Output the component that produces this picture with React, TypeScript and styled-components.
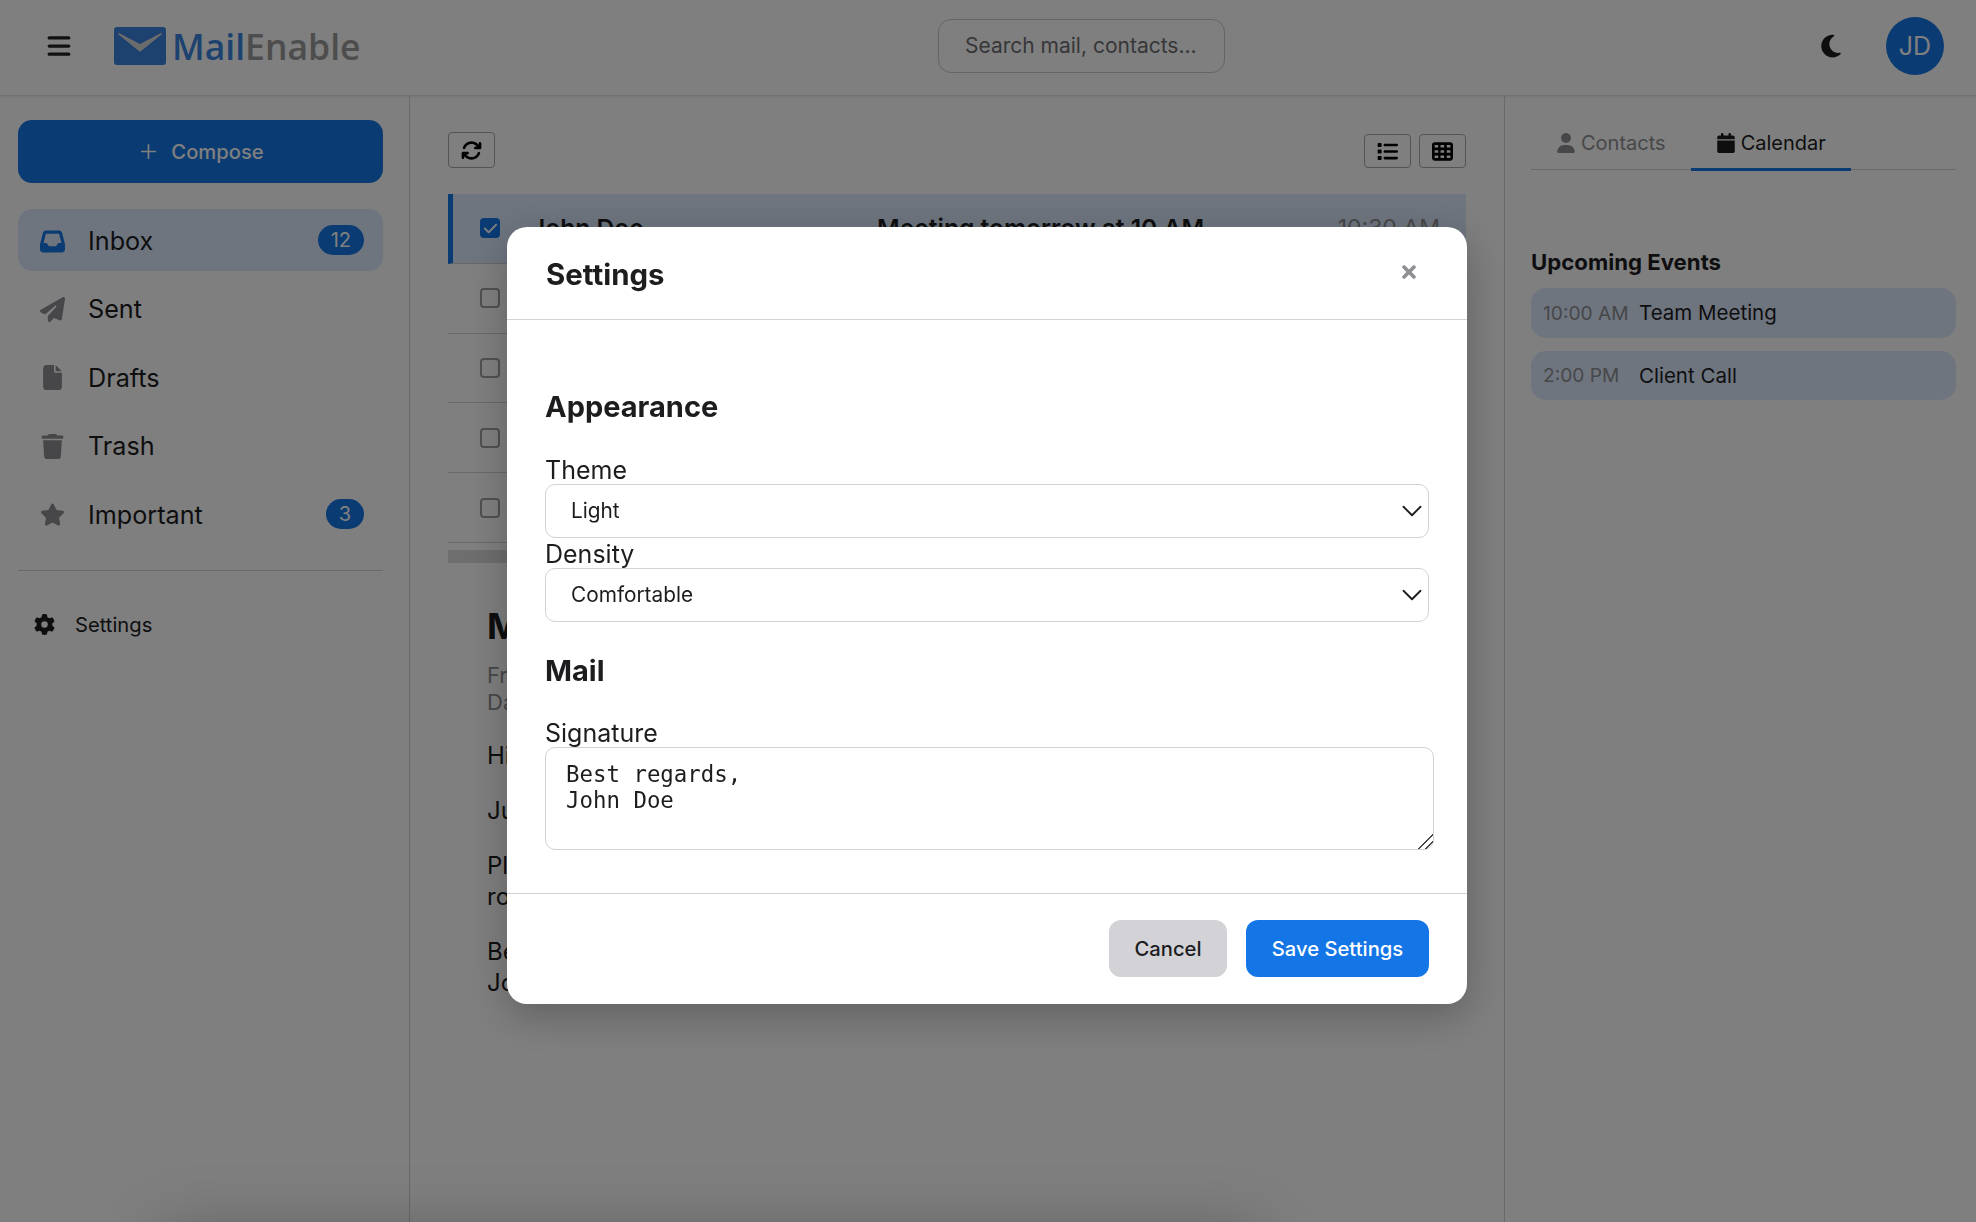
import React from 'react';
import styled, {createGlobalStyle} from 'styled-components';
import {FaTimes} from 'react-icons/fa';
import {
    FaArrowsRotate, FaBars, FaCalendar, FaCheck, FaFile, FaGear, FaInbox, FaList, FaMoon, FaPaperPlane,
    FaStar, FaTableCells, FaTrash, FaUser
} from 'react-icons/fa6';
import {ChevronDown, Plus} from 'lucide-react';

const navItems = [
    {label: 'Inbox', icon: <FaInbox/>, count: 12, active: true},
    {label: 'Sent', icon: <FaPaperPlane/>},
    {label: 'Drafts', icon: <FaFile/>},
    {label: 'Trash', icon: <FaTrash/>},
    {label: 'Important', icon: <FaStar/>, count: 3},
];

const mails = [
    {from: 'John Doe', subject: 'Meeting tomorrow at 10 AM', time: '10:30 AM', selected: true},
    {from: 'Jane Smith', subject: 'Project update', time: '9:15 AM'},
    {from: 'Mark Wilson', subject: 'Invoice attached', time: 'Yesterday'},
    {from: 'Anna Lee', subject: 'Lunch on Friday?', time: 'Yesterday'},
    {from: 'Support', subject: 'Your ticket was resolved', time: 'Monday'},
];

const events = [
    {time: '10:00 AM', title: 'Team Meeting'},
    {time: '2:00 PM', title: 'Client Call'},
];

function App() {
    return (
        <>
            <GlobalStyle/>
            <Page>
                <Header>
                    <HeaderLeft>
                        <MenuButton><FaBars/></MenuButton>
                        <Logo>
                            <svg width="52" height="38" viewBox="0 0 52 38">
                                <rect width="52" height="38" rx="3" fill="#3d84e0"/>
                                <path d="M5 7 L26 24 L47 7 L26 18 Z" fill="#d8d8d8" stroke="#d8d8d8" strokeWidth="1.5" strokeLinejoin="round"/>
                            </svg>
                            <LogoText><span>Mail</span>Enable</LogoText>
                        </Logo>
                    </HeaderLeft>
                    <Search placeholder="Search mail, contacts..."/>
                    <HeaderRight>
                        <MoonIcon><FaMoon/></MoonIcon>
                        <Avatar>JD</Avatar>
                    </HeaderRight>
                </Header>
                <Columns>
                    <Sidebar>
                        <ComposeButton><Plus size={23} strokeWidth={1.8}/>Compose</ComposeButton>
                        <Nav>
                            {navItems.map((item) => (
                                <NavItem key={item.label} $active={item.active}>
                                    <NavIcon $active={item.active}>{item.icon}</NavIcon>
                                    <NavLabel>{item.label}</NavLabel>
                                    {item.count && <Badge>{item.count}</Badge>}
                                </NavItem>
                            ))}
                        </Nav>
                        <Separator/>
                        <SettingsLink><FaGear/>Settings</SettingsLink>
                    </Sidebar>
                    <Main>
                        <Toolbar>
                            <ToolButton $tall><FaArrowsRotate/></ToolButton>
                            <ToolGroup>
                                <ToolButton><FaList/></ToolButton>
                                <ToolButton><FaTableCells/></ToolButton>
                            </ToolGroup>
                        </Toolbar>
                        <MailList>
                            {mails.map((mail) => (
                                <MailRow key={mail.from} $selected={mail.selected}>
                                    <CheckBox $checked={mail.selected}>{mail.selected && <FaCheck/>}</CheckBox>
                                    <MailFrom>{mail.from}</MailFrom>
                                    <MailSubject>{mail.subject}</MailSubject>
                                    <MailTime>{mail.time}</MailTime>
                                </MailRow>
                            ))}
                        </MailList>
                        <ListScrollbar/>
                        <Detail>
                            <DetailTitle>Meeting tomorrow at 10 AM</DetailTitle>
                            <DetailMeta>From: John Doe<br/>Date: Today, 10:30 AM</DetailMeta>
                            <DetailText>Hi team,</DetailText>
                            <DetailText>Just a reminder about our meeting tomorrow at 10 AM.</DetailText>
                            <DetailText>Please bring your project updates and be ready to discuss the<br/>roadmap for next quarter.</DetailText>
                            <DetailText>Best regards,<br/>John Doe</DetailText>
                        </Detail>
                    </Main>
                    <RightPanel>
                        <Tabs>
                            <Tab><FaUser/>Contacts</Tab>
                            <Tab $active><FaCalendar/>Calendar</Tab>
                        </Tabs>
                        <EventsTitle>Upcoming Events</EventsTitle>
                        {events.map((event) => (
                            <EventCard key={event.title}>
                                <EventTime>{event.time}</EventTime>
                                <span>{event.title}</span>
                            </EventCard>
                        ))}
                    </RightPanel>
                </Columns>
            </Page>
            <Overlay>
                <HiddenDialog/>
                <Modal>
                    <ModalHeader>
                        <ModalTitle>Settings</ModalTitle>
                        <CloseButton><FaTimes/></CloseButton>
                    </ModalHeader>
                    <ModalBody>
                        <SectionTitle>Appearance</SectionTitle>
                        <FieldLabel>Theme</FieldLabel>
                        <SelectBox>
                            <Select defaultValue="Light">
                                <option>Light</option>
                                <option>Dark</option>
                            </Select>
                            <ChevronDown size={34} strokeWidth={1.3}/>
                        </SelectBox>
                        <FieldLabel>Density</FieldLabel>
                        <SelectBox>
                            <Select defaultValue="Comfortable">
                                <option>Comfortable</option>
                                <option>Compact</option>
                            </Select>
                            <ChevronDown size={34} strokeWidth={1.3}/>
                        </SelectBox>
                        <SectionTitle $second>Mail</SectionTitle>
                        <FieldLabel>Signature</FieldLabel>
                        <Signature defaultValue={'Best regards,\nJohn Doe'}/>
                    </ModalBody>
                    <ModalFooter>
                        <CancelButton>Cancel</CancelButton>
                        <SaveButton>Save Settings</SaveButton>
                    </ModalFooter>
                </Modal>
            </Overlay>
        </>
    );
}

const GlobalStyle = createGlobalStyle`
  * {
    box-sizing: border-box;
  }

  html, body {
    margin: 0;
    height: 100%;
    overflow: hidden;
    background: #fff;
    color: #1d1d1f;
    font-family: Inter, "Liberation Sans", sans-serif;
  }
`;

const Page = styled.div`
  display: flex;
  flex-direction: column;
  height: 100vh;
`;

const Header = styled.header`
  display: grid;
  grid-template-columns: 892px 287px 1fr;
  align-items: center;
  height: 96px;
  padding: 0 32px 4px 46px;
  border-bottom: 1px solid #e4e4e4;
  box-shadow: 0 1px 3px rgba(0, 0, 0, 0.08);
`;

const HeaderLeft = styled.div`
  display: flex;
  align-items: center;
  gap: 42px;
`;

const MenuButton = styled.div`
  display: flex;
  font-size: 26px;
  color: #222;
`;

const Logo = styled.div`
  display: flex;
  align-items: center;
  gap: 6px;
`;

const LogoText = styled.div`
  font-family: "Open Sans", sans-serif;
  font-size: 35.5px;
  font-weight: 600;
  color: #9a9a9a;

  span {
    color: #3d84e0;
  }
`;

const Search = styled.input`
  width: 287px;
  height: 54px;
  padding: 0 8px 0 26px;
  border: 1px solid #c9c9cc;
  border-radius: 13px;
  background: transparent;
  font: 21px Inter, sans-serif;

  &::placeholder {
    color: #6e6e73;
    opacity: 1;
  }
`;

const HeaderRight = styled.div`
  display: flex;
  justify-content: flex-end;
  align-items: center;
  gap: 42px;
`;

const MoonIcon = styled.div`
  display: flex;
  font-size: 26px;
  color: #1d1d1f;
`;

const Avatar = styled.div`
  display: flex;
  justify-content: center;
  align-items: center;
  width: 58px;
  height: 58px;
  border-radius: 50%;
  background: #1476e6;
  color: #fff;
  font-size: 25px;
`;

const Columns = styled.div`
  display: grid;
  grid-template-columns: 410px 1fr 472px;
  flex: 1;
  min-height: 0;
`;

const Sidebar = styled.aside`
  padding: 24px 26px 0 18px;
  border-right: 1px solid #d2d2d7;
`;

const ComposeButton = styled.button`
  display: flex;
  justify-content: center;
  align-items: center;
  gap: 11px;
  width: 100%;
  height: 63px;
  padding-bottom: 2px;
  border: 0;
  border-radius: 14px;
  background: #1476e6;
  color: #fff;
  font: 500 20.2px Inter, sans-serif;
`;

const Nav = styled.nav`
  display: flex;
  flex-direction: column;
  gap: 6.4px;
  margin-top: 26px;
`;

const NavItem = styled.div<{$active?: boolean}>`
  display: flex;
  align-items: center;
  height: 62px;
  padding: 0 19px 0 21px;
  border-radius: 14px;
  background: ${({$active}) => ($active ? '#deebff' : 'transparent')};
`;

const NavIcon = styled.div<{$active?: boolean}>`
  display: flex;
  justify-content: center;
  width: 27px;
  margin: 2px 22px 0 0;
  font-size: 25px;
  color: ${({$active}) => ($active ? '#1476e6' : '#8e8e93')};
`;

const NavLabel = styled.span`
  flex: 1;
  margin-top: 2px;
  font-size: 25.2px;
`;

const Badge = styled.span`
  min-width: 38px;
  padding: 0 13px;
  border-radius: 15px;
  background: #1476e6;
  color: #fff;
  font-size: 20px;
  line-height: 30px;
  text-align: center;
`;

const Separator = styled.hr`
  margin: 25px 0 0;
  border: 0;
  border-top: 1px solid #d2d2d7;
`;

const SettingsLink = styled.div`
  display: flex;
  align-items: center;
  gap: 20px;
  margin: 41px 0 0 16px;
  font-size: 20.2px;

  svg {
    font-size: 21px;
  }
`;

const Main = styled.main`
  min-width: 0;
  padding: 36px 38px 0;
`;

const Toolbar = styled.div`
  display: flex;
  justify-content: space-between;
  align-items: flex-end;
  margin-bottom: 26px;
`;

const ToolGroup = styled.div`
  display: flex;
  gap: 8px;
`;

const ToolButton = styled.button<{$tall?: boolean}>`
  display: flex;
  justify-content: center;
  align-items: center;
  width: 47px;
  height: ${({$tall}) => ($tall ? '36px' : '34px')};
  padding: 0;
  border: 1px solid #a9a9ad;
  border-radius: 4px;
  background: transparent;
  color: #000;
  font-size: 21px;
`;

const MailList = styled.div`
  display: flex;
  flex-direction: column;
`;

const MailRow = styled.div<{$selected?: boolean}>`
  display: grid;
  grid-template-columns: 20px 377px 1fr auto;
  align-items: center;
  height: 69.8px;
  padding: 0 26px 0 ${({$selected}) => ($selected ? '27px' : '32px')};
  border-left: ${({$selected}) => ($selected ? '5px solid #1476e6' : '0')};
  border-bottom: 1px solid #d2d2d7;
  background: ${({$selected}) => ($selected ? '#deebff' : 'transparent')};
  font-size: 24.6px;
`;

const CheckBox = styled.span<{$checked?: boolean}>`
  display: flex;
  justify-content: center;
  align-items: center;
  width: 20px;
  height: 20px;
  border: ${({$checked}) => ($checked ? '0' : '2px solid #a0a0a4')};
  border-radius: 4px;
  background: ${({$checked}) => ($checked ? '#1476e6' : '#fff')};
  color: #fff;
  font-size: 15px;
`;

const MailFrom = styled.span`
  padding-left: 31px;
  font-weight: 600;
`;

const MailSubject = styled.span`
  font-weight: 600;
  white-space: nowrap;
`;

const MailTime = styled.span`
  color: #8e8e93;
  font-size: 23px;
`;

const ListScrollbar = styled.div`
  height: 13px;
  margin-top: 7px;
  background: #dcdcdc;
`;

const Detail = styled.article`
  padding: 40px 39px 0;
`;

const DetailTitle = styled.h2`
  margin: 0 0 13px;
  font-size: 36px;
  font-weight: 700;
  line-height: 46px;
  white-space: nowrap;
`;

const DetailMeta = styled.p`
  margin: 0 0 24px;
  color: #8e8e93;
  font-size: 22px;
  line-height: 27px;
`;

const DetailText = styled.p`
  margin: 0 0 24px;
  font-size: 24px;
  line-height: 31px;
`;

const RightPanel = styled.aside`
  padding: 24px 20px 0 26px;
  border-left: 1px solid #d2d2d7;
`;

const Tabs = styled.div`
  display: flex;
  height: 50px;
  border-bottom: 1px solid #d2d2d7;
`;

const Tab = styled.div<{$active?: boolean}>`
  display: flex;
  align-items: center;
  gap: 5px;
  height: 51px;
  padding: 0 25px 2px;
  border-bottom: 3px solid ${({$active}) => ($active ? '#1476e6' : 'transparent')};
  color: ${({$active}) => ($active ? '#1d1d1f' : '#8e8e93')};
  font-size: 20px;

  svg {
    font-size: 20px;
  }
`;

const EventsTitle = styled.h3`
  margin: 78px 0 12px;
  font-size: 22.2px;
  font-weight: 700;
  line-height: 28px;
`;

const EventCard = styled.div`
  display: flex;
  align-items: center;
  height: 49.5px;
  margin-bottom: 13px;
  padding: 0 12px;
  border-radius: 15px;
  background: #deebff;
  font-size: 20.5px;
`;

const EventTime = styled.span`
  width: 96px;
  color: #8e8e93;
  font-size: 19.2px;
`;

const Overlay = styled.div`
  position: fixed;
  inset: 0;
  display: flex;
  justify-content: center;
  align-items: center;
  padding: 8px 2px 0 0;
  background: rgba(0, 0, 0, 0.5);
`;

const HiddenDialog = styled.div`
  position: absolute;
  top: calc(100% + 10px);
  left: 160px;
  width: 1100px;
  height: 300px;
  box-shadow: 0 0 60px rgba(0, 0, 0, 0.25);
`;

const Modal = styled.div`
  width: 960px;
  border-radius: 20px;
  background: #fff;
  box-shadow: 0 12px 40px rgba(0, 0, 0, 0.25);
`;

const ModalHeader = styled.div`
  display: flex;
  justify-content: space-between;
  align-items: center;
  height: 93px;
  padding: 3px 48px 0 39px;
  border-bottom: 1px solid #d2d2d7;
`;

const ModalTitle = styled.h2`
  margin: 0;
  font-size: 29.4px;
  font-weight: 700;
`;

const CloseButton = styled.div`
  display: flex;
  margin-bottom: 4px;
  color: #8e8e93;
  font-size: 20px;
`;

const ModalBody = styled.div`
  height: 573px;
  padding: 69px 38px 0;
`;

const SectionTitle = styled.h3<{$second?: boolean}>`
  margin: ${({$second}) => ($second ? '31px' : '0')} 0 ${({$second}) => ($second ? '30px' : '31px')};
  font-size: 29px;
  font-weight: 700;
  line-height: 36px;
`;

const FieldLabel = styled.label`
  display: block;
  font-size: 25px;
  line-height: 28px;
`;

const SelectBox = styled.div`
  position: relative;
  height: 54px;
  margin-bottom: 2px;

  svg {
    position: absolute;
    top: 10px;
    right: 0;
    pointer-events: none;
  }
`;

const Select = styled.select`
  width: 100%;
  height: 100%;
  padding: 0 25px;
  border: 1px solid #d2d2d7;
  border-radius: 10px;
  background: #fff;
  appearance: none;
  color: #1d1d1f;
  font: 20.8px Inter, sans-serif;
`;

const Signature = styled.textarea`
  display: block;
  width: 889px;
  height: 103px;
  padding: 13px 20px;
  border: 1px solid #d2d2d7;
  border-radius: 10px;
  color: #1d1d1f;
  font: 22.4px/26px "DejaVu Sans Mono", monospace;

  &::-webkit-resizer {
    background: linear-gradient(135deg, transparent 48%, #444 48%, #444 56%, transparent 56%, transparent 72%, #444 72%, #444 80%, transparent 80%);
  }
`;

const ModalFooter = styled.div`
  display: flex;
  justify-content: flex-end;
  gap: 19px;
  padding: 26px 38px 27px;
  border-top: 1px solid #d2d2d7;
`;

const CancelButton = styled.button`
  width: 118px;
  height: 57px;
  border: 0;
  border-radius: 12px;
  background: #d2d2d7;
  color: #1d1d1f;
  font: 500 20.2px Inter, sans-serif;
`;

const SaveButton = styled(CancelButton)`
  width: 183px;
  background: #1476e6;
  color: #fff;
`;

export default App;
